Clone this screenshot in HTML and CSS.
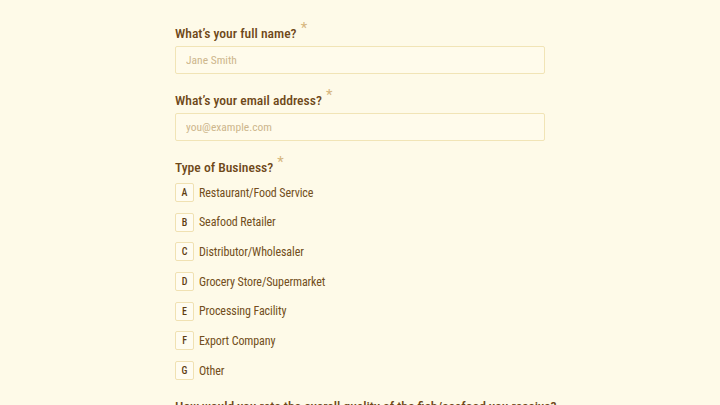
FILE: index.html
```html
<!DOCTYPE html>
<html lang="en">
  <head>
    <meta charset="UTF-8" />
    <meta name="viewport" content="width=device-width, initial-scale=1.0" />
    <title>Seafood Feedback</title>
    <link rel="stylesheet" href="styles.css">
  </head>
  <body>
    <div class="form-wrap">
      <form id="feedbackForm">
        <div class="question">
          <label for="fullName">What’s your full name? <span class="req">*</span></label>
          <input type="text" id="fullName" placeholder="Jane Smith" />
        </div>

        <div class="question">
          <label for="email">What’s your email address? <span class="req">*</span></label>
          <input type="email" id="email" placeholder="you@example.com" />
        </div>

        <div class="question">
          <label>Type of Business? <span class="req">*</span></label>
          <ul class="choices">
            <li class="choice"><span class="key">A</span>Restaurant/Food Service</li>
            <li class="choice"><span class="key">B</span>Seafood Retailer</li>
            <li class="choice"><span class="key">C</span>Distributor/Wholesaler</li>
            <li class="choice"><span class="key">D</span>Grocery Store/Supermarket</li>
            <li class="choice"><span class="key">E</span>Processing Facility</li>
            <li class="choice"><span class="key">F</span>Export Company</li>
            <li class="choice"><span class="key">G</span>Other</li>
          </ul>
        </div>

        <div class="question">
          <label>How would you rate the overall quality of the fish/seafood you receive?</label>
        </div>
      </form>
    </div>
  </body>
</html>
```

FILE: styles.css
```css
* {
  margin: 0;
  padding: 0;
  box-sizing: border-box;
  font-family: "Roboto Condensed", "Roboto", sans-serif;
}

body {
  background: #fefae8;
  color: #6e4818;
}

.form-wrap {
  width: 370px;
  margin: 0 auto;
  padding-top: 23px;
}

.question {
  display: flex;
  flex-direction: column;
  margin-bottom: 16px;
}

.question label {
  font-size: 13.6px;
  font-weight: 500;
  line-height: 20px;
  margin-bottom: 3px;
  white-space: nowrap;
}

.req {
  color: #d6b67e;
  font-size: 15px;
  font-weight: 400;
  position: relative;
  top: -5px;
  margin-left: 1px;
}

input[type="text"],
input[type="email"] {
  width: 100%;
  height: 28px;
  padding: 0 10px;
  border: 1px solid #f1e4b6;
  border-radius: 2px;
  background: #fffbeb;
  font-size: 11.5px;
  color: #6e4818;
  outline: none;
}

input::placeholder {
  color: #cdb68c;
}

.choices {
  list-style: none;
  display: flex;
  flex-direction: column;
  gap: 10.7px;
  margin-top: 3px;
}

.choice {
  display: flex;
  align-items: center;
  gap: 5px;
  font-size: 12px;
  letter-spacing: -0.1px;
  height: 19px;
  color: #724e20;
}

.key {
  width: 19px;
  height: 19px;
  display: flex;
  align-items: center;
  justify-content: center;
  border: 1px solid #f0e1b2;
  border-radius: 2px;
  background: #fffcf0;
  font-size: 10px;
  font-weight: 500;
  color: #5e3c12;
}
```
